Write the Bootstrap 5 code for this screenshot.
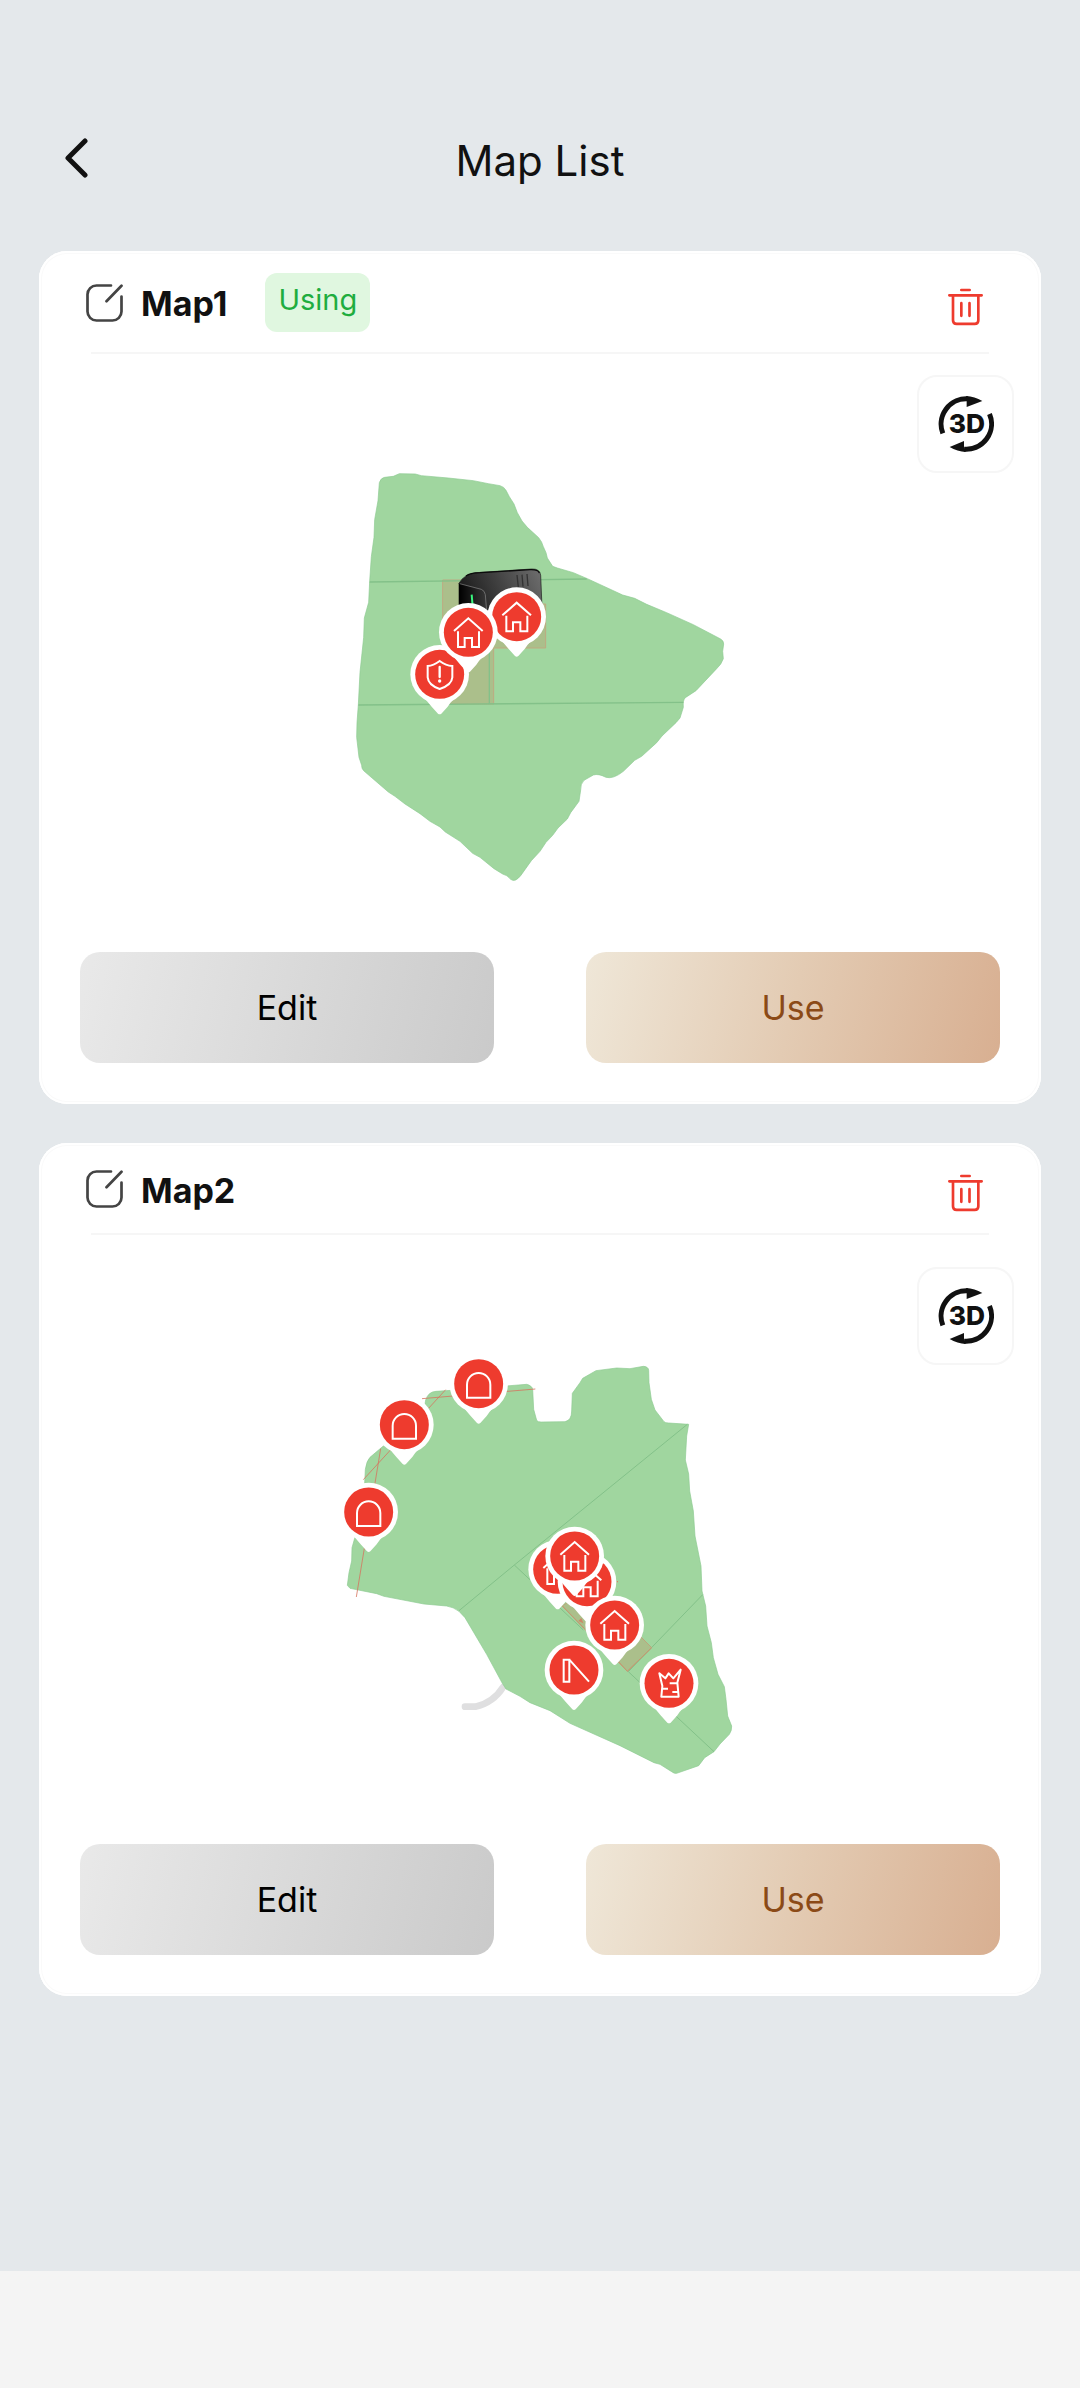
<!DOCTYPE html>
<html lang="en">
<head>
<meta charset="utf-8">
<meta name="viewport" content="width=device-width, initial-scale=1">
<title>Map List</title>
<link href="https://cdn.jsdelivr.net/npm/bootstrap@5.3.0/dist/css/bootstrap.min.css" rel="stylesheet">
<style>
  body { background: #e4e8eb; color: #111; font-family: Inter, sans-serif; }
  svg { display: block; }
  .top-bar { padding: 110px 39px 39px; }
  .top-bar .bar-row { height: 102px; }
  .side-slot { width: 80px; }
  .icon-btn { border: 0; padding: 0; background: none; line-height: 1; }
  .back-btn { padding: 0 0 5px 25px; }
  .page-title { font-size: 42px; line-height: 52px; font-weight: 400; }
  .map-list { padding: 0 39px; gap: 39px; }
  .map-card { border: 0; border-radius: 28px; min-height: 853px; background: #fff; box-shadow: inset 0 0 0 2px #fff, inset 0 0 0 3px #fafafa; }
  .map-head { padding: 2px 58px 0 47px; height: 90px; }
  .map-head.in-use { height: 101px; }
  .map-name { font-size: 34px; line-height: 40px; font-weight: 700; padding: 3px 0 0 18px; }
  .using-tag { font-size: 29px; line-height: 53px; font-weight: 400; color: #1fad3f; background: #e0f7e0; padding: 0 13px 6px; border-radius: 12px; margin-left: 38px; }
  .trash-btn { padding-top: 8px; }
  .head-line { height: 2px; margin: 0 52px; background: #f6f6f6; }
  .map-stage { padding-top: 47px; }
  .view-3d { top: 124px; right: 27px; width: 97px; height: 98px; border: 2px solid #f6f6f6; border-radius: 20px; background: #fff; }
  .map-actions { padding: 0 41px 41px; gap: 92px; }
  .map-actions .btn { height: 111px; border: 0; border-radius: 20px; font-size: 34px; }
  .btn-edit, .btn-edit:hover { color: #000; background: linear-gradient(104deg, #e9e9e9, #cacaca); }
  .btn-use, .btn-use:hover { color: #8b4a17; background: linear-gradient(104deg, #efe7d8, #e3cbb3 50%, #d8af91); }
  .foot-bar { height: 117px; background: #f4f4f4; }
</style>
</head>
<body>
<svg width="0" height="0" class="position-absolute" aria-hidden="true">
  <defs>
    <symbol id="edit" viewBox="0 0 37 38"><path d="M25 1.500H10.500a9 9 0 0 0-9 9v17a9 9 0 0 0 9 9h16a9 9 0 0 0 9-9V12.500M35.500 1.700 20.500 17.200" fill="none" stroke="#444" stroke-width="2.700" stroke-linecap="round"/></symbol>
    <symbol id="trash" viewBox="0 0 105 113"><path d="M40 5.500H65M4 21.500H101M15 22V96Q15 107 26 107H80Q91 107 91 96V22M40 45V83M64.500 45V83" fill="none" stroke="#ee3b2e" stroke-width="8" stroke-linecap="round"/></symbol>
    <symbol id="rotate" viewBox="0 0 168 168">
      <g fill="none" stroke="#111" stroke-width="15"><path d="M14.500 112A76 76 0 0 1 90 8.500"/><path d="M154.500 54A76 76 0 0 1 78 159.500"/></g>
      <path d="M84 0Q110 1 133 15L86 33V8ZM84 168Q58 167 35 153L78 135V160Z" fill="#111"/>
      <text x="87" y="111" text-anchor="middle" font-family="Inter, sans-serif" font-weight="800" font-size="79" fill="#111">3D</text>
    </symbol>
    <g id="pin"><path d="M-62 58Q-40 75-24 97L-5 118Q0 122 5 118L24 97Q40 72 62 58Z" fill="#fff"/><circle r="88" fill="#fff"/><circle r="73.500" fill="#ee3b2e"/></g>
    <g id="pin-house"><use href="#pin"/><path d="M-43-4-0-42 43-4M-31-3V44H-11V17H11V44H32V-3" fill="none" stroke="#fff" stroke-width="6"/></g>
    <g id="pin-gate"><use href="#pin"/><path d="M-35 42V3A35 35 0 0 1 35 3V42Z" fill="none" stroke="#fff" stroke-width="6"/></g>
    <linearGradient id="dock" x1="0" x2="1" y1=".3" y2="0"><stop offset="0" stop-color="#1c1c1c"/><stop offset=".5" stop-color="#454545"/><stop offset="1" stop-color="#707070"/></linearGradient>
    <linearGradient id="dockFace"><stop offset="0" stop-color="#000"/><stop offset="1" stop-color="#383838"/></linearGradient>
  </defs>
</svg>

<div class="d-flex flex-column min-vh-100">
  <header class="top-bar">
    <div class="bar-row d-flex align-items-center justify-content-between">
      <div class="side-slot">
        <button type="button" class="icon-btn back-btn" aria-label="Back"><svg width="24" height="40" viewBox="0 0 24 40"><path d="M21 3 4 20 21 37" fill="none" stroke="#111" stroke-width="5" stroke-linecap="round" stroke-linejoin="round"/></svg></button>
      </div>
      <h1 class="page-title m-0">Map List</h1>
      <div class="side-slot"></div>
    </div>
  </header>

  <main class="map-list d-flex flex-column flex-grow-1">
    <section class="card map-card position-relative">
      <div class="map-head in-use d-flex align-items-center">
        <button type="button" class="icon-btn" aria-label="Rename Map1"><svg width="37" height="38"><use href="#edit"/></svg></button>
        <h2 class="map-name m-0">Map1</h2>
        <span class="using-tag">Using</span>
        <button type="button" class="icon-btn trash-btn ms-auto" aria-label="Delete Map1"><svg width="35" height="38"><use href="#trash"/></svg></button>
      </div>
      <div class="head-line"></div>
      <div class="map-stage d-flex flex-grow-1 align-items-center justify-content-center">
        <svg width="400" height="450" viewBox="0 4 1200 1350" role="img" aria-label="Map1 lawn">
          <path d="M118 96Q122 82 134 80L160 77 178 69 226 70 244 75 325 82 400 90 445 99 480 105Q492 108 498 119L508 138 522 160 532 186 546 211 562 230 596 261Q606 273 610 288L618 306 622 322 638 347 652 352 700 366 742 384 848 433 884 443 920 461 980 486 1060 522 1142 565Q1151 570 1151 580L1148 602 1150 624Q1144 642 1130 654L1068 720 1036 741Q1028 748 1030 770L1020 802 1008 816 966 856 950 876 905 917 884 929 850 962Q820 986 798 980 775 968 760 973L732 989Q721 1000 722 1018L717 1052 692 1086 682 1105 654 1132 638 1154 618 1175 600 1202 574 1230 542 1275Q525 1296 512 1286 502 1273 488 1270L462 1254 420 1220 398 1208 360 1172 316 1144 300 1129 270 1112 240 1089 195 1060 165 1037 145 1024 72 961Q64 953 65 944L57 920 50 860 51 816 55 762 60 665 71 560 73 502 86 455 89 392 94 318 102 260 104 207 114 150Z" fill="#a0d69f" stroke="#8dca91" stroke-width="2"/>
          <path d="M308 388H500V460H617V592H461V760H308Z" fill="#abbf8b" stroke="#bfa980" stroke-width="3"/>
          <path d="M89 394 740 385M55 763 1030 755M448 600V760" fill="none" stroke="#83c189" stroke-width="4"/>
          <path d="M357 480V398Q372 370 410 366L575 355Q600 354 602 374L606 470 550 520H440Z" fill="url(#dock)" stroke="#191919" stroke-width="2"/>
          <path d="M357 476V398L424 417Q434 420 436 432L441 500H359Z" fill="url(#dockFace)"/>
          <path d="M359 399 424 416Q434 420 436 432L440 480" fill="none" stroke="#888" stroke-width="2"/>
          <path d="M378 376Q390 367 420 366L570 357Q595 356 598 367" fill="none" stroke="#0b0b0b" stroke-width="4"/>
          <path d="M531 373 535 410M546 372 549 408M561 370 564 406" stroke="#333" stroke-width="4"/>
          <path d="M395 432 398 468" stroke="#39f47e" stroke-width="6"/>
          <use href="#pin" x="299" y="671"/>
          <path d="M299 631Q280 645 263 646V680Q265 703 299 715 335 703 337 680V646Q318 645 299 631Z" fill="none" stroke="#fff" stroke-width="6"/>
          <path d="M299 649V679" stroke="#fff" stroke-width="7" stroke-linecap="round"/><circle cx="299" cy="691" r="5" fill="#fff"/>
          <use href="#pin-house" x="530" y="498"/>
          <use href="#pin-house" x="385" y="545"/>
        </svg>
      </div>
      <button type="button" class="view-3d position-absolute d-flex align-items-center justify-content-center p-0" aria-label="3D view"><svg width="56" height="56"><use href="#rotate"/></svg></button>
      <div class="map-actions d-flex">
        <button type="button" class="btn btn-edit flex-fill w-100">Edit</button>
        <button type="button" class="btn btn-use flex-fill w-100">Use</button>
      </div>
    </section>

    <section class="card map-card position-relative">
      <div class="map-head d-flex align-items-center">
        <button type="button" class="icon-btn" aria-label="Rename Map2"><svg width="37" height="38"><use href="#edit"/></svg></button>
        <h2 class="map-name m-0">Map2</h2>
        <button type="button" class="icon-btn trash-btn ms-auto" aria-label="Delete Map2"><svg width="35" height="38"><use href="#trash"/></svg></button>
      </div>
      <div class="head-line"></div>
      <div class="map-stage d-flex flex-grow-1 align-items-center justify-content-center">
        <svg width="420" height="450" viewBox="0 -4 1260 1350" role="img" aria-label="Map2 lawn">
          <path d="M405 1102H436Q490 1090 520 1042" fill="none" stroke="#dfdfe0" stroke-width="20" stroke-linecap="round"/>
          <path d="M52 738 57 700 65 665 66 625 74 597 100 520 104 432 106 390Q110 364 120 354L160 320 284 200 287 182Q295 157 318 156L380 152 540 139 590 135Q606 139 608 150L611 210 620 243Q623 249 635 248L705 247Q725 243 725 215L727 162 750 130 758 117 798 94 860 86 900 88 940 81Q955 82 956 93L957 130 964 180 975 212 1002 247Q1006 251 1016 251L1076 255 1070 290 1066 362 1076 404 1079 455 1090 515 1095 590 1104 635 1113 680 1116 755 1127 800 1131 860 1144 910 1150 955 1164 1005 1183 1042 1188 1080 1193 1130 1205 1160Q1206 1173 1198 1185L1170 1214 1152 1237 1124 1255 1106 1279 1040 1302Q1032 1303 1025 1297L990 1275 972 1270 870 1219 720 1152 660 1114 600 1090 570 1071 528 1049 517 1032 470 945 405 835 387 816Q370 803 350 800L282 794 162 771 140 763 60 747Z" fill="#a0d69f" stroke="#8dca91" stroke-width="2"/>
          <path d="M387 814 553 677 1072 255M553 677 760 872M895 997 1152 1237M895 997 1118 766" fill="none" stroke="#83c189" stroke-width="3"/>
          <path d="M697 800 725 780 850 870 930 890 965 925 892 996 862 965 760 866Z" fill="#abbf8b" stroke="#bda47b" stroke-width="3"/>
          <path d="M697 800 764 868M865 966 892 996 965 925" stroke="#c69670" stroke-width="3" fill="none"/>
          <path d="M745 845 754 836 760 852Z" fill="#ce8869"/>
          <path d="M276 178 616 149M347 151 100 421M152 328 79 773" fill="none" stroke="#d6745f" stroke-opacity=".8" stroke-width="3"/>
          <circle cx="862" cy="727" r="2" fill="#d6745f"/>
          <use href="#pin-gate" x="446" y="133"/>
          <use href="#pin-gate" x="223" y="256"/>
          <use href="#pin-gate" x="116" y="518"/>
          <use href="#pin-house" x="683" y="690"/>
          <use href="#pin-house" x="771" y="727"/>
          <use href="#pin-house" x="734" y="650"/>
          <use href="#pin-house" x="854" y="857"/>
          <use href="#pin" x="732" y="992"/>
          <path d="M701 961H718V1027H701ZM718 961 777 1027" fill="none" stroke="#fff" stroke-width="6"/>
          <use href="#pin" x="1017" y="1032"/>
          <path d="M988 1002 1006 1017 1016 1002 1030 1017 1052 991 1042 1030 1046 1072H994L997 1040ZM1019 1032H1041M997 1048H1014M1027 1058H1042" fill="none" stroke="#fff" stroke-width="6" stroke-linejoin="round"/>
        </svg>
      </div>
      <button type="button" class="view-3d position-absolute d-flex align-items-center justify-content-center p-0" aria-label="3D view"><svg width="56" height="56"><use href="#rotate"/></svg></button>
      <div class="map-actions d-flex">
        <button type="button" class="btn btn-edit flex-fill w-100">Edit</button>
        <button type="button" class="btn btn-use flex-fill w-100">Use</button>
      </div>
    </section>
  </main>
  <footer class="foot-bar"></footer>
</div>
<script src="https://cdn.jsdelivr.net/npm/bootstrap@5.3.0/dist/js/bootstrap.bundle.min.js"></script>
</body>
</html>
